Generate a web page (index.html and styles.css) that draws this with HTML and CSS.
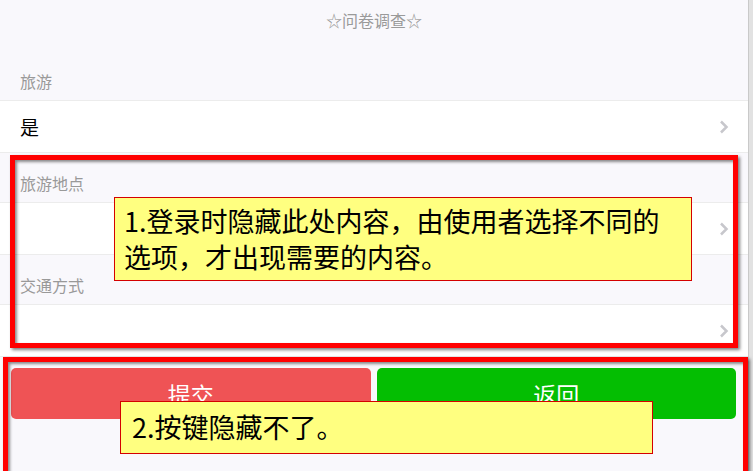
FILE: index.html
```html
<!doctype html>
<html>
<head>
    <meta charset="UTF-8">
    <meta name="viewport" content="width=device-width, initial-scale=1.0">
    <title>问卷调查</title>
    <link rel="stylesheet" href="styles.css">
</head>
<body>
    <div class="page">
        <div class="title">☆问卷调查☆</div>

        <div class="cells-title">旅游</div>
        <div class="cell">
            <span class="cell-text">是</span>
            <svg class="arrow" width="10" height="14" viewBox="0 0 10 14"><polyline points="2,1.5 7.5,7 2,12.5" fill="none" stroke="#c7c7cc" stroke-width="2.5"/></svg>
        </div>

        <div class="cells-title">旅游地点</div>
        <div class="cell">
            <span class="cell-text"></span>
            <svg class="arrow" width="10" height="14" viewBox="0 0 10 14"><polyline points="2,1.5 7.5,7 2,12.5" fill="none" stroke="#c7c7cc" stroke-width="2.5"/></svg>
        </div>

        <div class="cells-title">交通方式</div>
        <div class="cell">
            <span class="cell-text"></span>
            <svg class="arrow" width="10" height="14" viewBox="0 0 10 14"><polyline points="2,1.5 7.5,7 2,12.5" fill="none" stroke="#c7c7cc" stroke-width="2.5"/></svg>
        </div>

        <div class="btn-area">
            <button class="btn btn-warn">提交</button>
            <button class="btn btn-primary">返回</button>
        </div>

        <!-- annotations drawn over the screenshot -->
        <div class="mark mark-1"></div>
        <div class="mark mark-2"></div>
        <div class="note note-1">1.登录时隐藏此处内容，由使用者选择不同的<br>选项，才出现需要的内容。</div>
        <div class="note note-2">2.按键隐藏不了。</div>
    </div>
    <div class="scrollbar"></div>
</body>
</html>
```
FILE: styles.css
```css
body {
    margin: 0;
    display: flex;
    height: 471px;
    overflow: hidden;
    background: #fff;
    font-family: "Noto Sans CJK SC", "Noto Sans", sans-serif;
}
.page {
    position: relative;
    width: 748px;
    background: #f9f8fc;
}
.scrollbar {
    flex: 1;
    background: #e2e2e2;
    border-left: 1px solid #c9c9c9;
}
.title {
    height: 51px;
    line-height: 40px;
    text-align: center;
    font-size: 16px;
    color: #9a9a9a;
}
.cells-title {
    padding: 20px 20px 9px;
    line-height: 20px;
    font-size: 16px;
    color: #999;
}
.cell {
    display: flex;
    align-items: center;
    justify-content: space-between;
    height: 51px;
    padding: 0 19px 0 20px;
    background: #fff;
    border-top: 1px solid #ececec;
    border-bottom: 1px solid #ececec;
}
.cell-text {
    font-size: 19px;
    color: #000;
}
.btn-area {
    display: flex;
    gap: 6px;
    padding: 11px 12px 0 11px;
}
.btn {
    flex: 1;
    height: 51px;
    border: none;
    border-radius: 5px;
    color: #fff;
    font-size: 23px;
    font-family: "Noto Sans CJK SC", sans-serif;
    padding: 0;
}
.btn-warn {
    background: #ef5355;
}
.btn-primary {
    background: #04be02;
}
.mark {
    position: absolute;
    border: 5px solid #ff0000;
    box-shadow: 2px 2px 3px rgba(0, 0, 0, 0.5), inset 2px 2px 3px rgba(0, 0, 0, 0.45);
}
.mark-1 {
    left: 10px;
    top: 155px;
    width: 718px;
    height: 183px;
}
.mark-2 {
    left: 3px;
    top: 357px;
    width: 735px;
    height: 110px;
}
.note {
    position: absolute;
    box-sizing: border-box;
    background: #ffff80;
    border: 1px solid #d40000;
    color: #000;
    font-size: 27px;
    line-height: 36px;
    white-space: nowrap;
}
.note-1 {
    left: 114px;
    top: 197px;
    width: 578px;
    height: 84px;
    padding: 5px 10px 0 9px;
}
.note-2 {
    left: 120px;
    top: 401px;
    width: 533px;
    height: 53px;
    padding: 7px 12px 0 11px;
}
```
